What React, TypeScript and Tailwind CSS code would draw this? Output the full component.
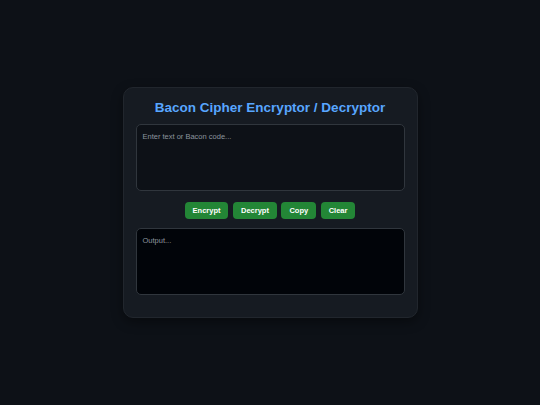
import React, { useState } from 'react';

const encodeMap: Record<string, string> = {};
'ABCDEFGHIJKLMNOPQRSTUVWXYZ'.split('').forEach((ch, idx) => {
  encodeMap[ch] = idx.toString(2).padStart(5, '0').replace(/0/g, 'A').replace(/1/g, 'B');
});

const encrypt = (text: string) =>
  text
    .toUpperCase()
    .split('')
    .filter((ch) => encodeMap[ch])
    .map((ch) => encodeMap[ch])
    .join(' ');

const decrypt = (code: string) => {
  const clean = code.toUpperCase().replace(/[^AB]/g, '');
  let out = '';
  for (let i = 0; i + 5 <= clean.length; i += 5) {
    const idx = parseInt(clean.slice(i, i + 5).replace(/A/g, '0').replace(/B/g, '1'), 2);
    out += String.fromCharCode(65 + idx);
  }
  return out;
};

const btn =
  'h-[17px] px-2 rounded-[4px] bg-[#238636] hover:bg-[#2ea043] text-white text-[7.5px] font-bold leading-none';

export default function App() {
  const [input, setInput] = useState('');
  const [output, setOutput] = useState('');

  return (
    <div className="min-h-screen w-full bg-[#0d1117] flex items-center justify-center font-['Liberation_Sans',Arial,sans-serif]">
      <div className="w-[295px] h-[231px] rounded-[10px] border border-[#21262d] bg-[#161b22] shadow-[0_4px_12px_rgba(0,0,0,0.4)] px-[12px] pt-[12px] flex flex-col">
        <h1 className="text-center text-[13.5px] font-bold text-[#58a6ff] leading-[16px]">
          Bacon Cipher Encryptor / Decryptor
        </h1>
        <textarea
          value={input}
          onChange={(e) => setInput(e.target.value)}
          placeholder="Enter text or Bacon code..."
          className="mt-[8px] h-[67px] w-full resize-none rounded-[5px] border border-[#30363d] bg-[#0d1117] px-[6px] py-[6px] text-[7.5px] text-[#c9d1d9] placeholder:text-[#8b949e] outline-none"
        />
        <div className="mt-[11px] flex justify-center gap-[4.5px]">
          <button className={btn} onClick={() => setOutput(encrypt(input))}>
            Encrypt
          </button>
          <button className={btn} onClick={() => setOutput(decrypt(input))}>
            Decrypt
          </button>
          <button className={btn} onClick={() => navigator.clipboard?.writeText(output)}>
            Copy
          </button>
          <button
            className={btn}
            onClick={() => {
              setInput('');
              setOutput('');
            }}
          >
            Clear
          </button>
        </div>
        <textarea
          readOnly
          value={output}
          placeholder="Output..."
          className="mt-[9px] h-[67px] w-full resize-none rounded-[5px] border border-[#30363d] bg-[#010409] px-[6px] py-[6px] text-[7.5px] text-[#c9d1d9] placeholder:text-[#8b949e] outline-none"
        />
      </div>
    </div>
  );
}
